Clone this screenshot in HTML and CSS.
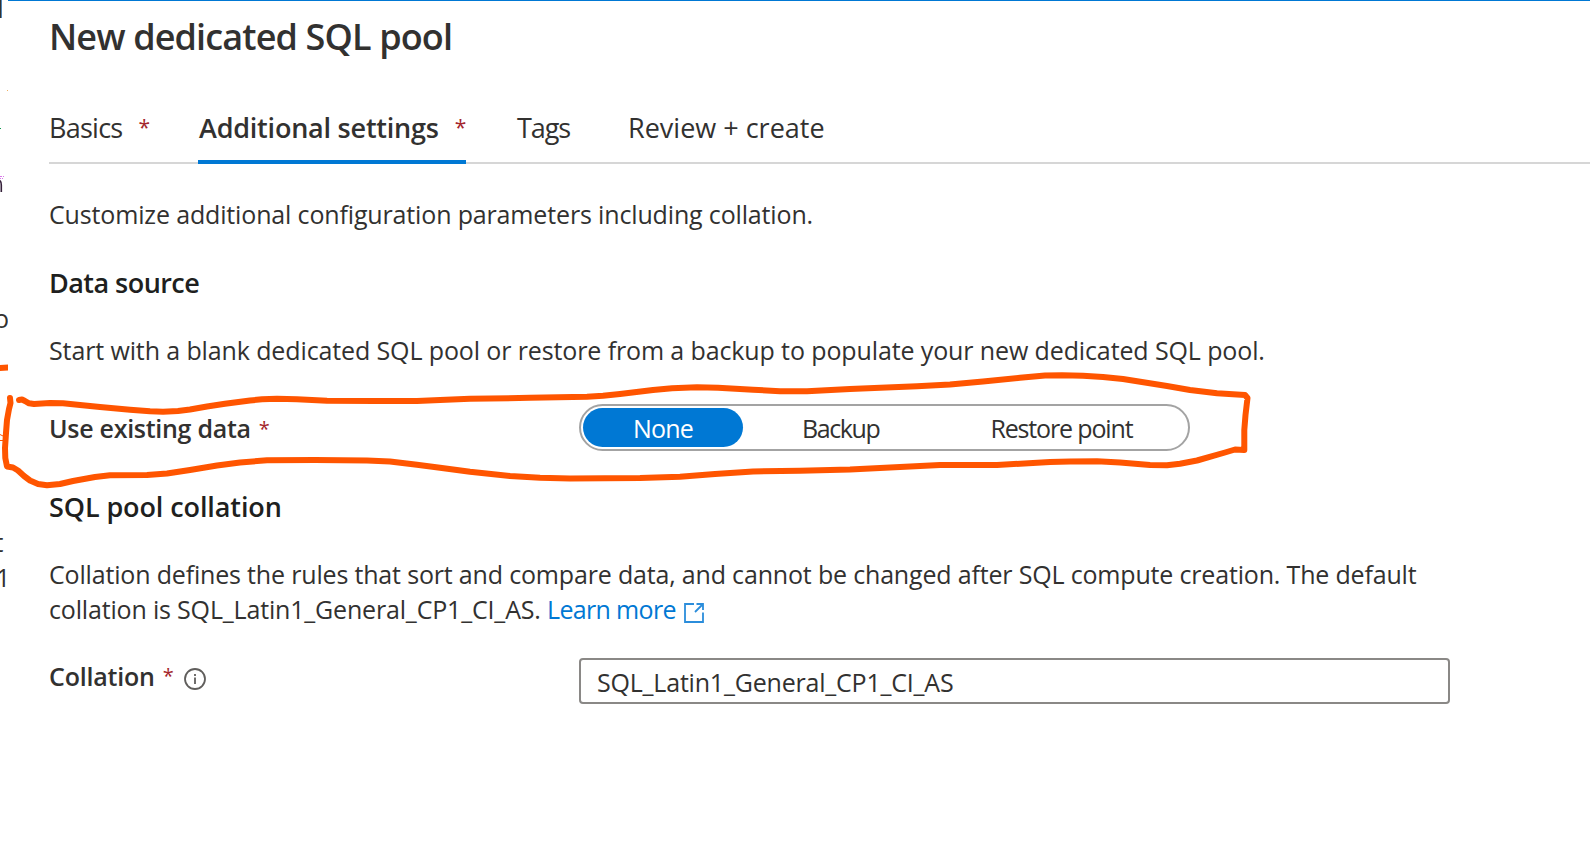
FILE: index.html
```html
<!DOCTYPE html>
<html lang="en">
<head>
<meta charset="utf-8">
<title>New dedicated SQL pool</title>
<link rel="stylesheet" href="styles.css">
</head>
<body>
<main class="panel">
  <h1 class="title">New dedicated SQL pool</h1>
  <nav class="tabs">
    <a class="tab tab-basics">Basics<span class="req">*</span></a>
    <a class="tab tab-active">Additional settings<span class="req">*</span></a>
    <a class="tab tab-tags">Tags</a>
    <a class="tab tab-review">Review + create</a>
  </nav>
  <p class="text intro">Customize additional configuration parameters including collation.</p>
  <h2 class="heading">Data source</h2>
  <p class="text start">Start with a blank dedicated SQL pool or restore from a backup to populate your new dedicated SQL pool.</p>
  <div class="field field-data">
    <div class="label label-data">Use existing data<span class="req">*</span></div>
    <div class="pill">
      <span class="option option-on">None</span>
      <span class="option option-backup">Backup</span>
      <span class="option option-restore">Restore point</span>
    </div>
  </div>
  <h2 class="heading heading-collation">SQL pool collation</h2>
  <p class="text about">Collation defines the rules that sort and compare data, and cannot be changed after SQL compute creation. The default<br>collation is SQL_Latin1_General_CP1_CI_AS. <a class="link">Learn more<svg class="external" viewBox="0 0 20 20"><path d="M10 1H1V19H19V9.5M12.5 1H19V7M19 1L11 9"/></svg></a></p>
  <div class="field field-collation">
    <div class="label label-collation">Collation<span class="req">*</span><svg class="info" viewBox="0 0 22 22"><circle cx="11" cy="11" r="10"/><path d="M11 9.5V16M11 6V8"/></svg></div>
    <div class="input">SQL_Latin1_General_CP1_CI_AS</div>
  </div>
</main>

<!-- Strip of the page behind the panel, and the pen annotation -->
<svg class="overlay" viewBox="0 0 1590 856">
  <clipPath id="strip"><rect width="8" height="856"/></clipPath>
  <g clip-path="url(#strip)">
    <rect width="1.4" height="18" fill="#323130"/>
    <rect x="1.2" width="0.8" height="18" fill="#3a80c0"/>
    <rect x="7" y="90" width="1" height="1" fill="#f0b060"/>
    <rect y="128" width="1" height="1" fill="#109a50"/>
    <path d="M0 176.5H2M3 176.5H4M0 178.5H1M2 178.5H3" stroke="#d878e8"/>
    <path d="M0 180.5Q1.3 182 1.3 185V192" fill="none" stroke="#35203a" stroke-width="1.6"/>
    <text class="behind" x="-6" y="328">o</text>
    <text class="behind" x="-5.5" y="552">t</text>
    <text class="behind" x="-4" y="587">1</text>
    <path d="M-3 368L10 367.5" class="pen"/>
    <path d="M0 434.5L3 436M0 440.5H3" stroke="#ff5500" fill="none"/>
  </g>
  <polyline class="pen" points="19,400 22,399.5 25,401 29,403.3 34,404 50,403 63,403.3 80,405 100,407 130,409.7 150,411.3 163,411.7 178,411 190,409.5 207,406.5 225,403.8 250,400.5 262,399.3 277,398.8 297,399.3 327,400.8 375,401 417,401 440,400 470,398.8 530,397.8 587,396.7 603,395.8 620,394 653,390 672,388.2 697,387.3 718,387.7 753,389.8 780,391.2 807,391.2 850,389 917,386.3 950,384.5 983,381.5 1020,377.8 1045,375.6 1062,375.3 1083,375.8 1103,377 1123,379 1167,386 1190,390 1217,393.2 1245,395 1247.5,398 1245.5,415 1244.3,430 1244.3,450 1235,449.5 1225,452.5 1197,460.5 1180,463.7 1167,465.2 1150,465 1120,462.5 1097,461.3 1070,461.5 1050,462 997,465 940,465 850,469.5 800,470.8 753,471.5 715,474 680,476.8 640,478 570,478.5 540,477.8 510,476 470,471.8 440,467.8 417,464.8 390,461.5 367,460.5 315,460 267,460.3 240,462.5 217,465.5 190,470 167,473.5 147,475 110,475.3 95,477 73,481 60,484 47,485.3 38,484 30,480.5 24,476 18,470.5 13,467.5 7,466.5 5.3,458 5,448 6,433 7,420 9,409 10.5,403 10,398"/>
</svg>
</body>
</html>
```
FILE: styles.css
```css
* { box-sizing: border-box; }
body { margin: 0; background: #fff; color: #323130; font-family: "Open Sans", sans-serif; overflow: hidden; }
h1, h2, p { margin: 0; }

.panel { margin-left: 8px; border-top: 1px solid #0078d4; padding: 12px 0 0 41px; white-space: nowrap; }
.title { font-size: 36px; line-height: 48px; font-weight: 600; letter-spacing: -0.87px; }

.tabs { display: flex; margin-top: 49px; height: 54px; border-bottom: 2px solid #d6d6d6; font-size: 27px; line-height: 36px; }
.tab { height: 54px; }
.tab-basics { width: 149px; letter-spacing: -0.75px; }
.tab-active { width: 268px; padding-left: 1px; font-weight: 600; letter-spacing: -0.22px; border-bottom: 4px solid #0078d4; }
.tab-tags { margin-left: 51px; width: 111px; letter-spacing: -1.1px; }
.tab-review { letter-spacing: 0; }

.req { display: inline-block; color: #a4262c; font-size: 21px; font-weight: 400; line-height: 20px; letter-spacing: 0; margin-left: 16px; vertical-align: 3px; }

.text { font-size: 25px; line-height: 35px; }
.intro { margin-top: 33px; letter-spacing: -0.15px; }
.start { margin-top: 32px; letter-spacing: -0.118px; }
.about { margin-top: 32px; letter-spacing: -0.173px; }

.heading { margin-top: 33px; font-size: 27px; line-height: 36px; font-weight: 600; letter-spacing: -0.54px; color: #201f1e; }
.heading-collation { margin-top: 38px; letter-spacing: -0.1px; }

.field { display: flex; }
.field-data { margin-top: 36px; height: 47px; }
.field-collation { margin-top: 31px; height: 46px; }
.label { width: 530px; font-size: 25px; font-weight: 600; }
.label .req { font-size: 20px; margin-left: 8px; vertical-align: 2px; }
.label-data { line-height: 49px; letter-spacing: -0.28px; }
.label-collation { display: flex; line-height: 37px; letter-spacing: -0.2px; }
.label-collation .req { line-height: 35px; }

.pill { display: flex; width: 611px; padding: 2px; border: 2px solid #a3a3a3; border-radius: 24px; font-size: 25px; line-height: 41px; letter-spacing: -1.15px; }
.option-on { width: 160px; height: 39px; border-radius: 20px; background: #0078d4; color: #fff; text-align: center; letter-spacing: -0.8px; }
.option-backup { margin-left: 59px; letter-spacing: -1.4px; }
.option-restore { margin-left: 111px; }

.link { color: #0078d4; letter-spacing: -0.67px; }
.external { width: 20px; height: 20px; margin-left: 8px; vertical-align: -4px; fill: none; stroke: #2b8ddb; stroke-width: 1.8; }
.info { width: 22px; height: 22px; margin: 10px 0 0 10px; fill: none; stroke: #605e5c; stroke-width: 1.8; }
.input { width: 871px; padding-left: 16px; border: 2px solid #8a8886; border-radius: 4px; font-size: 25px; line-height: 45px; letter-spacing: -0.2px; }

.overlay { position: absolute; left: 0; top: 0; width: 1590px; height: 856px; pointer-events: none; }
.behind { font-size: 25px; fill: #323130; }
.pen { fill: none; stroke: #ff5500; stroke-width: 6; stroke-linecap: round; stroke-linejoin: round; }
```
